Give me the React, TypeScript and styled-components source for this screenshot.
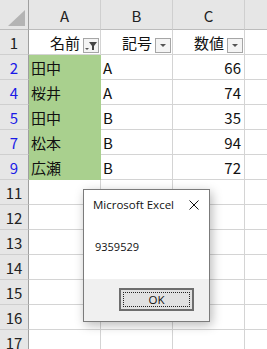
import React from "react";
import styled, { createGlobalStyle } from "styled-components";

const GlobalStyle = createGlobalStyle`
  html, body { margin: 0; padding: 0; background: #ffffff; overflow: hidden; }
  body { font-family: "Noto Sans CJK JP", "Noto Sans", sans-serif; }
`;

const Page = styled.div`
  position: relative;
  width: 267px;
  height: 349px;
  overflow: hidden;
`;

const Sheet = styled.div`
  display: grid;
  grid-template-columns: 29px 72px 72px 72px 72px;
  grid-template-rows: 30px;
  grid-auto-rows: 25px;
`;

const Corner = styled.div`
  position: relative;
  box-sizing: border-box;
  background: #e6e6e6;
  border-right: 1px solid #9f9f9f;
  border-bottom: 1px solid #bcbcbc;
`;

const CornerTriangle = styled.div`
  position: absolute;
  right: 3px;
  bottom: 3px;
  width: 0;
  height: 0;
  border-left: 17px solid transparent;
  border-bottom: 16px solid #b4b4b4;
`;

const ColHead = styled.div`
  box-sizing: border-box;
  background: #e6e6e6;
  border-right: 1px solid #cfcfcf;
  border-bottom: 1px solid #bcbcbc;
  display: flex;
  align-items: center;
  justify-content: center;
  font-size: 15px;
  color: #222;
  padding-top: 2px;
`;

const RowHead = styled.div<{ $filtered?: boolean }>`
  box-sizing: border-box;
  background: #e6e6e6;
  border-right: 1px solid #9f9f9f;
  border-bottom: 1px solid #cfcfcf;
  display: flex;
  align-items: center;
  justify-content: center;
  font-size: 15px;
  color: ${(p) => (p.$filtered ? "#1a1ae6" : "#222")};
`;

const Cell = styled.div<{ $fill?: boolean; $align?: "left" | "right" }>`
  box-sizing: border-box;
  background: ${(p) => (p.$fill ? "#a9d08e" : "#ffffff")};
  border-right: 1px solid ${(p) => (p.$fill ? "#a9d08e" : "#d4d4d4")};
  border-bottom: 1px solid ${(p) => (p.$fill ? "#a9d08e" : "#d4d4d4")};
  display: flex;
  align-items: center;
  justify-content: ${(p) => (p.$align === "right" ? "flex-end" : "flex-start")};
  padding: 0 3px 0 2px;
  font-size: 15px;
  color: #111;
  white-space: nowrap;
`;

const HeaderCell = styled.div`
  box-sizing: border-box;
  background: #ffffff;
  border-right: 1px solid #d4d4d4;
  border-bottom: 1px solid #d4d4d4;
  display: flex;
  align-items: center;
  justify-content: flex-end;
  gap: 3px;
  padding-right: 1px;
  font-size: 15px;
  color: #111;
`;

const FilterButton = styled.div`
  box-sizing: border-box;
  width: 16px;
  height: 15px;
  align-self: flex-end;
  margin-bottom: 1px;
  border: 1px solid #a6a6a6;
  background: #f4f4f4;
  display: flex;
  align-items: center;
  justify-content: center;
`;

const Dialog = styled.div`
  position: absolute;
  left: 83px;
  top: 189px;
  width: 127px;
  height: 133px;
  box-sizing: border-box;
  border: 1px solid #7b7b7b;
  background: #ffffff;
  box-shadow: 2px 3px 10px rgba(0, 0, 0, 0.28);
  display: flex;
  flex-direction: column;
  font-family: "Open Sans", "Noto Sans", sans-serif;
`;

const TitleBar = styled.div`
  height: 29px;
  display: flex;
  align-items: center;
  justify-content: space-between;
  padding: 0 10px 0 9px;
  font-size: 11.5px;
  color: #111;
`;

const Body = styled.div`
  flex: 1;
  display: flex;
  align-items: center;
  padding-left: 11px;
  padding-bottom: 6px;
  font-size: 11px;
  color: #111;
`;

const Footer = styled.div`
  height: 42px;
  background: #f0f0f0;
  display: flex;
  justify-content: flex-end;
  align-items: flex-start;
  padding: 9px 15px 0 0;
  box-sizing: border-box;
`;

const OkButton = styled.div`
  box-sizing: border-box;
  width: 75px;
  height: 23px;
  border: 2px solid #6d6d6d;
  background: #e1e1e1;
  padding: 2px;
  display: flex;
`;

const FocusRect = styled.div`
  flex: 1;
  border: 1px dotted #222;
  display: flex;
  align-items: center;
  justify-content: center;
  font-size: 11.5px;
  color: #111;
`;

const DropArrow = () => (
  <svg width="8" height="5" viewBox="0 0 8 5">
    <path d="M1 1 H7 L4 4 Z" fill="#555" />
  </svg>
);

const FunnelIcon = () => (
  <svg width="14" height="13" viewBox="0 0 14 13">
    <path d="M5 3 H13 L10 7 V11 H8 V7 Z" fill="#444" />
    <path d="M1 9 H5 L3 11 Z" fill="#555" />
  </svg>
);

const CloseIcon = () => (
  <svg width="10" height="10" viewBox="0 0 10 10">
    <path d="M0.5 0.5 L9.5 9.5 M9.5 0.5 L0.5 9.5" stroke="#111" strokeWidth="1" />
  </svg>
);

type Row = { n: number; name: string; code: string; value: number };

const data: Row[] = [
  { n: 2, name: "田中", code: "A", value: 66 },
  { n: 4, name: "桜井", code: "A", value: 74 },
  { n: 5, name: "田中", code: "B", value: 35 },
  { n: 7, name: "松本", code: "B", value: 94 },
  { n: 9, name: "広瀬", code: "B", value: 72 },
];

const emptyRows = [11, 12, 13, 14, 15, 16, 17];

export default function App() {
  return (
    <Page>
      <GlobalStyle />
      <Sheet>
        <Corner>
          <CornerTriangle />
        </Corner>
        <ColHead>A</ColHead>
        <ColHead>B</ColHead>
        <ColHead>C</ColHead>
        <ColHead />

        <RowHead>1</RowHead>
        <HeaderCell>
          名前
          <FilterButton>
            <FunnelIcon />
          </FilterButton>
        </HeaderCell>
        <HeaderCell>
          記号
          <FilterButton>
            <DropArrow />
          </FilterButton>
        </HeaderCell>
        <HeaderCell>
          数値
          <FilterButton>
            <DropArrow />
          </FilterButton>
        </HeaderCell>
        <Cell />

        {data.map((r) => (
          <React.Fragment key={r.n}>
            <RowHead $filtered>{r.n}</RowHead>
            <Cell $fill>{r.name}</Cell>
            <Cell>{r.code}</Cell>
            <Cell $align="right">{r.value}</Cell>
            <Cell />
          </React.Fragment>
        ))}

        {emptyRows.map((n) => (
          <React.Fragment key={n}>
            <RowHead>{n}</RowHead>
            <Cell />
            <Cell />
            <Cell />
            <Cell />
          </React.Fragment>
        ))}
      </Sheet>

      <Dialog>
        <TitleBar>
          <span>Microsoft Excel</span>
          <CloseIcon />
        </TitleBar>
        <Body>9359529</Body>
        <Footer>
          <OkButton>
            <FocusRect>OK</FocusRect>
          </OkButton>
        </Footer>
      </Dialog>
    </Page>
  );
}
